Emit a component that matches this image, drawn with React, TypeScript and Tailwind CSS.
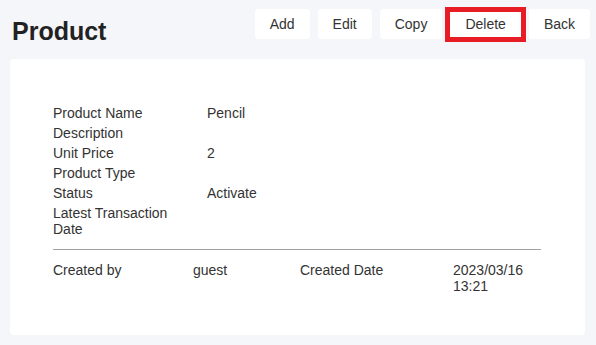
import React from 'react';

const fields: { label: string; value: string }[] = [
    { label: 'Product Name', value: 'Pencil' },
    { label: 'Description', value: '' },
    { label: 'Unit Price', value: '2' },
    { label: 'Product Type', value: '' },
    { label: 'Status', value: 'Activate' },
    { label: 'Latest Transaction Date', value: '' },
];

const actions = ['Add', 'Edit', 'Copy', 'Delete', 'Back'];

export default function App() {
    return (
        <div className="min-h-screen bg-[#f5f6fa] pl-[10px] pr-[6px] text-[14px] text-[#333] font-['Liberation_Sans',Arial,sans-serif]">
            {/* Header */}
            <div className="flex justify-between items-start h-[59px] pt-[9px]">
                <h1 className="ml-[2px] mt-[7px] text-[25px] leading-[30px] font-bold text-[#222]">Product</h1>
                <div className="flex gap-2">
                    {actions.map((a) => (
                        <button
                            key={a}
                            className="relative h-[30px] px-[15px] bg-white rounded-[3px] text-[14px] text-[#333]"
                        >
                            {a}
                            {a === 'Delete' && (
                                <span className="absolute -left-[5px] -right-[5px] -top-[2px] -bottom-[3px] border-[5px] border-[#e81c24] pointer-events-none" />
                            )}
                        </button>
                    ))}
                </div>
            </div>

            {/* Card */}
            <div className="mr-[5px] h-[276px] bg-white rounded-[4px] pt-[44px] pl-[43px] pr-[44px]">
                <div className="grid grid-cols-[154px_1fr] leading-4">
                    {fields.map((f) => (
                        <React.Fragment key={f.label}>
                            <div className="py-[2px] pr-[14px]">{f.label}</div>
                            <div className="py-[2px]">{f.value}</div>
                        </React.Fragment>
                    ))}
                </div>
                <div className="mt-[10px] border-t border-[#a0a0a0]" />
                <div className="grid grid-cols-[140px_107px_153px_88px] leading-4 pt-[12px]">
                    <div>Created by</div>
                    <div>guest</div>
                    <div>Created Date</div>
                    <div>2023/03/16 13:21</div>
                </div>
            </div>
        </div>
    );
}
